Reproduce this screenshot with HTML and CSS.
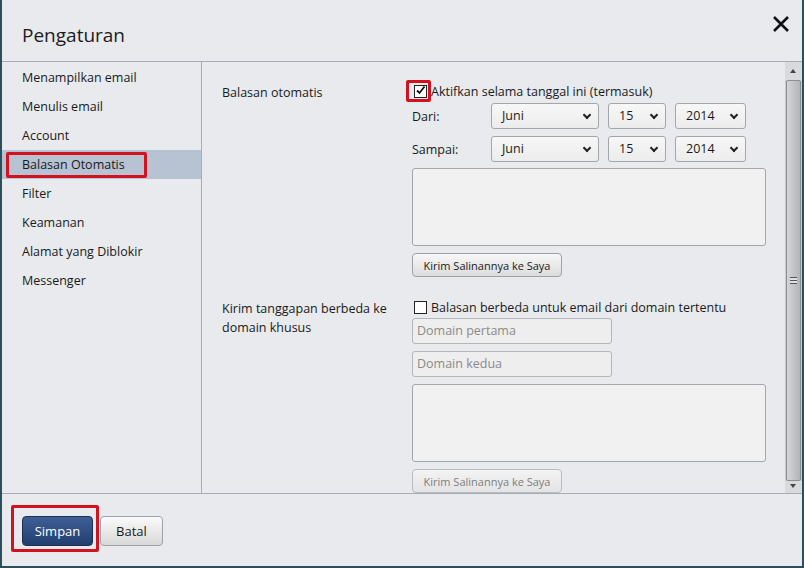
FILE: index.html
```html
<!DOCTYPE html>
<html lang="id">
<head>
    <meta charset="UTF-8">
    <title>Pengaturan</title>
    <link rel="stylesheet" href="styles.css">
</head>
<body>
    <div class="dialog">
        <div class="header">
            <h1>Pengaturan</h1>
            <svg class="close" width="18" height="18" viewBox="0 0 18 18">
                <path d="M2 2 L16 16 M16 2 L2 16" stroke="#111" stroke-width="2.6" fill="none"/>
            </svg>
        </div>

        <div class="main">
            <ul class="sidebar">
                <li>Menampilkan email</li>
                <li>Menulis email</li>
                <li>Account</li>
                <li class="active"><span class="mark"></span>Balasan Otomatis</li>
                <li>Filter</li>
                <li>Keamanan</li>
                <li>Alamat yang Diblokir</li>
                <li>Messenger</li>
            </ul>

            <div class="content">
                <div class="section">
                    <div class="label">Balasan otomatis</div>
                    <div class="controls">
                        <label class="check first">
                            <span class="box checked">
                                <svg width="11" height="11" viewBox="0 0 11 11"><path d="M2 5.5 L4.5 8 L9.5 1.5" stroke="#111" stroke-width="1.8" fill="none"/></svg>
                            </span>
                            <span class="mark-check"></span>
                            Aktifkan selama tanggal ini (termasuk)
                        </label>
                        <div class="daterow">
                            <span class="rowlabel">Dari:</span>
                            <div class="select month">Juni<i></i></div>
                            <div class="select day">15<i></i></div>
                            <div class="select year">2014<i></i></div>
                        </div>
                        <div class="daterow">
                            <span class="rowlabel">Sampai:</span>
                            <div class="select month">Juni<i></i></div>
                            <div class="select day">15<i></i></div>
                            <div class="select year">2014<i></i></div>
                        </div>
                        <div class="textarea"></div>
                        <button class="small">Kirim Salinannya ke Saya</button>
                    </div>
                </div>

                <div class="section second">
                    <div class="label">Kirim tanggapan berbeda ke domain khusus</div>
                    <div class="controls">
                        <label class="check">
                            <span class="box"></span>
                            Balasan berbeda untuk email dari domain tertentu
                        </label>
                        <div class="input">Domain pertama</div>
                        <div class="input">Domain kedua</div>
                        <div class="textarea"></div>
                        <button class="small disabled">Kirim Salinannya ke Saya</button>
                    </div>
                </div>
            </div>

            <div class="scrollbar">
                <div class="arrow up"></div>
                <div class="thumb"><span></span></div>
                <div class="arrow down"></div>
            </div>
        </div>

        <div class="footer">
            <span class="mark-save"></span>
            <button class="primary">Simpan</button>
            <button class="plain">Batal</button>
        </div>
    </div>
</body>
</html>
```

FILE: styles.css
```css
* {
    box-sizing: border-box;
}

body {
    margin: 0;
    background-color: #2d4f5c;
    font-family: "Open Sans", "Noto Sans", sans-serif;
    font-size: 12.5px;
    color: #1a1a1a;
    overflow: hidden;
}

.dialog {
    margin-left: 2px;
    width: 800px;
    height: 566px;
    background-color: #e8eaee;
    display: flex;
    flex-direction: column;
}

.header {
    height: 62px;
    border-bottom: 1px solid #a7adb6;
    display: flex;
    justify-content: space-between;
    align-items: flex-start;
    padding: 0 12px 0 20px;
}

.header h1 {
    margin: 22px 0 0;
    font-size: 19px;
    font-weight: normal;
    color: #1c1c1c;
}

.close {
    margin-top: 15px;
}

.main {
    height: 432px;
    display: flex;
    border-bottom: 1px solid #a7adb6;
}

.sidebar {
    list-style: none;
    margin: 0;
    padding: 1px 0 0;
    width: 200px;
    border-right: 1px solid #a7adb6;
}

.sidebar li {
    position: relative;
    height: 29px;
    line-height: 29px;
    padding-left: 20px;
}

.sidebar li.active {
    background-color: #b7c2d2;
}

.sidebar .mark {
    position: absolute;
    left: 4px;
    top: 2px;
    width: 141px;
    height: 26px;
    border: 3px solid #d2121e;
    border-radius: 2px;
}

.content {
    flex: 1;
    padding: 18px 0 0 20px;
}

.section {
    display: flex;
}

.section.second {
    margin-top: 19px;
}

.label {
    width: 190px;
    padding-top: 3px;
    padding-right: 12px;
    line-height: 19px;
}

.controls {
    display: flex;
    flex-direction: column;
    gap: 7px;
    width: 354px;
}

.check {
    position: relative;
    display: flex;
    align-items: center;
    height: 22px;
    margin-bottom: -6px;
    padding-left: 2px;
}

.second .check {
    margin-bottom: -7px;
}

.box {
    width: 13px;
    height: 13px;
    border: 1.5px solid #222;
    background: #fff;
    margin-right: 4px;
    display: flex;
    align-items: center;
    justify-content: center;
}

.box.checked svg {
    margin-top: -1px;
}

.mark-check {
    position: absolute;
    left: -6px;
    top: 0;
    width: 25px;
    height: 22px;
    border: 3px solid #d2121e;
    border-radius: 2px;
}

.daterow {
    display: flex;
    align-items: center;
    gap: 9px;
    height: 26px;
}

.daterow + .textarea {
    margin-top: -1px;
}

.rowlabel {
    width: 70px;
}

.select {
    position: relative;
    height: 26px;
    line-height: 24px;
    padding-left: 10px;
    border: 1px solid #a3a6ab;
    border-radius: 3px;
    background: linear-gradient(#f7f7f7, #ececec);
}

.select i {
    position: absolute;
    right: 8px;
    top: 8px;
    width: 6px;
    height: 6px;
    border-right: 2px solid #222;
    border-bottom: 2px solid #222;
    transform: rotate(45deg);
}

.select.month {
    width: 108px;
}

.select.day {
    width: 58px;
}

.select.year {
    width: 71px;
}

.textarea {
    height: 78px;
    border: 1px solid #a3a6ab;
    border-radius: 3px;
    background-color: #f1f1f1;
}

.input {
    width: 200px;
    height: 26px;
    line-height: 24px;
    padding-left: 4px;
    border: 1px solid #b3b6bb;
    border-radius: 3px;
    background-color: #eeeeee;
    color: #8a8a8a;
}

button {
    font-family: inherit;
    cursor: pointer;
}

.small {
    width: 150px;
    height: 24px;
    font-size: 11px;
    border: 1px solid #9ea2a8;
    border-radius: 4px;
    background: linear-gradient(#f8f8f8, #dcdcdc);
    color: #1a1a1a;
}

.small.disabled {
    color: #7d7d7d;
    border-color: #b8bbc0;
    background: linear-gradient(#f3f3f3, #e4e4e4);
}

.scrollbar {
    width: 17px;
    margin-left: auto;
    display: flex;
    flex-direction: column;
    background-color: #c9cacc;
}

.arrow {
    height: 18px;
    position: relative;
    background-color: #d9dadc;
}

.arrow::after {
    content: "";
    position: absolute;
    left: 5px;
    border-left: 3.5px solid transparent;
    border-right: 3.5px solid transparent;
}

.arrow.up::after {
    top: 7px;
    border-bottom: 4px solid #444;
}

.arrow.down {
    height: 12px;
}

.arrow.down::after {
    top: 3px;
    border-top: 4px solid #444;
}

.thumb {
    flex: 1;
    margin: 0 1px;
    border: 1px solid #8c8e92;
    border-radius: 2px;
    background: linear-gradient(90deg, #d4d5d7, #b2b4b7);
    display: flex;
    align-items: center;
    justify-content: center;
}

.thumb span {
    width: 7px;
    height: 7px;
    border-top: 1px solid #555;
    border-bottom: 1px solid #555;
    background: linear-gradient(#e0e0e0 0 2px, #555 2px 3px, #e0e0e0 3px);
}

.footer {
    position: relative;
    flex: 1;
    padding: 22px 0 0 20px;
    display: flex;
    align-items: flex-start;
    gap: 7px;
}

.mark-save {
    position: absolute;
    left: 9px;
    top: 11px;
    width: 88px;
    height: 47px;
    border: 3px solid #d2121e;
    border-radius: 2px;
}

.primary {
    width: 71px;
    height: 30px;
    font-size: 13px;
    color: #fff;
    border: 1px solid #1c2f52;
    border-radius: 4px;
    background: linear-gradient(#3f5f95, #213e6f);
}

.plain {
    width: 63px;
    height: 30px;
    font-size: 13px;
    color: #1a1a1a;
    border: 1px solid #9ea2a8;
    border-radius: 4px;
    background: linear-gradient(#fafafa, #d8d8d8);
}
```
